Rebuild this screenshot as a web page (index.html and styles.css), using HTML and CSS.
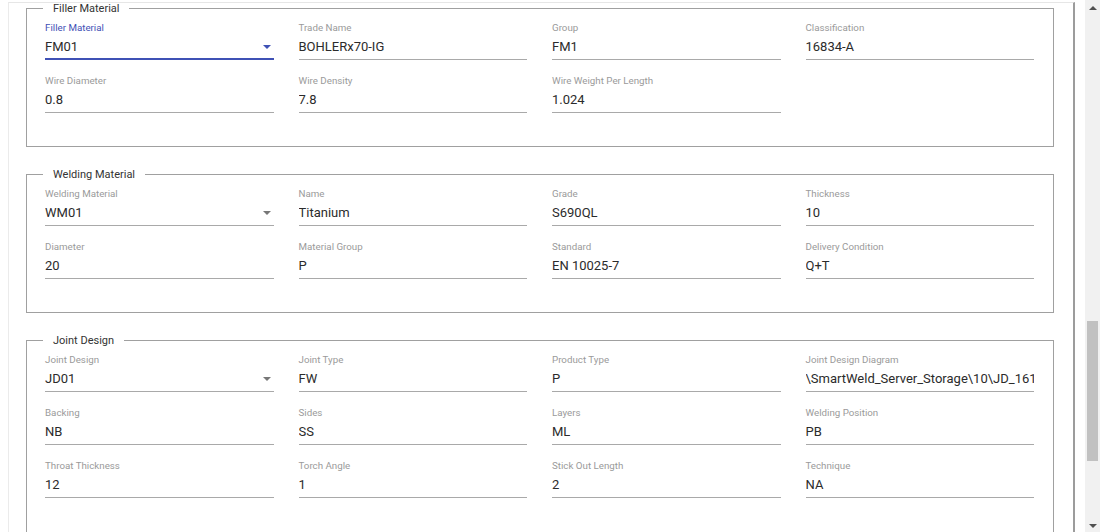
FILE: index.html
```html
<!DOCTYPE html>
<html>
<head>
<meta charset="utf-8">
<link rel="stylesheet" href="styles.css">
</head>
<body>
<div class="page">
  <div class="main">
    <div class="card">
      <fieldset class="group">
        <legend>Filler Material</legend>
        <div class="grid">
          <div class="field focused">
            <div class="label">Filler Material</div>
            <div class="control"><span class="value">FM01</span><span class="arrow"></span></div>
          </div>
          <div class="field">
            <div class="label">Trade Name</div>
            <div class="control"><span class="value">BOHLERx70-IG</span></div>
          </div>
          <div class="field">
            <div class="label">Group</div>
            <div class="control"><span class="value">FM1</span></div>
          </div>
          <div class="field">
            <div class="label">Classification</div>
            <div class="control"><span class="value">16834-A</span></div>
          </div>
          <div class="field">
            <div class="label">Wire Diameter</div>
            <div class="control"><span class="value">0.8</span></div>
          </div>
          <div class="field">
            <div class="label">Wire Density</div>
            <div class="control"><span class="value">7.8</span></div>
          </div>
          <div class="field">
            <div class="label">Wire Weight Per Length</div>
            <div class="control"><span class="value">1.024</span></div>
          </div>
        </div>
      </fieldset>

      <fieldset class="group">
        <legend>Welding Material</legend>
        <div class="grid">
          <div class="field">
            <div class="label">Welding Material</div>
            <div class="control"><span class="value">WM01</span><span class="arrow"></span></div>
          </div>
          <div class="field">
            <div class="label">Name</div>
            <div class="control"><span class="value">Titanium</span></div>
          </div>
          <div class="field">
            <div class="label">Grade</div>
            <div class="control"><span class="value">S690QL</span></div>
          </div>
          <div class="field">
            <div class="label">Thickness</div>
            <div class="control"><span class="value">10</span></div>
          </div>
          <div class="field">
            <div class="label">Diameter</div>
            <div class="control"><span class="value">20</span></div>
          </div>
          <div class="field">
            <div class="label">Material Group</div>
            <div class="control"><span class="value">P</span></div>
          </div>
          <div class="field">
            <div class="label">Standard</div>
            <div class="control"><span class="value">EN 10025-7</span></div>
          </div>
          <div class="field">
            <div class="label">Delivery Condition</div>
            <div class="control"><span class="value">Q+T</span></div>
          </div>
        </div>
      </fieldset>

      <fieldset class="group">
        <legend>Joint Design</legend>
        <div class="grid">
          <div class="field">
            <div class="label">Joint Design</div>
            <div class="control"><span class="value">JD01</span><span class="arrow"></span></div>
          </div>
          <div class="field">
            <div class="label">Joint Type</div>
            <div class="control"><span class="value">FW</span></div>
          </div>
          <div class="field">
            <div class="label">Product Type</div>
            <div class="control"><span class="value">P</span></div>
          </div>
          <div class="field">
            <div class="label">Joint Design Diagram</div>
            <div class="control"><span class="value">\SmartWeld_Server_Storage\10\JD_1614839201.png</span></div>
          </div>
          <div class="field">
            <div class="label">Backing</div>
            <div class="control"><span class="value">NB</span></div>
          </div>
          <div class="field">
            <div class="label">Sides</div>
            <div class="control"><span class="value">SS</span></div>
          </div>
          <div class="field">
            <div class="label">Layers</div>
            <div class="control"><span class="value">ML</span></div>
          </div>
          <div class="field">
            <div class="label">Welding Position</div>
            <div class="control"><span class="value">PB</span></div>
          </div>
          <div class="field">
            <div class="label">Throat Thickness</div>
            <div class="control"><span class="value">12</span></div>
          </div>
          <div class="field">
            <div class="label">Torch Angle</div>
            <div class="control"><span class="value">1</span></div>
          </div>
          <div class="field">
            <div class="label">Stick Out Length</div>
            <div class="control"><span class="value">2</span></div>
          </div>
          <div class="field">
            <div class="label">Technique</div>
            <div class="control"><span class="value">NA</span></div>
          </div>
        </div>
      </fieldset>
    </div>
  </div>
  <div class="scrollbar">
    <div class="sb-btn sb-up"><span class="tri-up"></span></div>
    <div class="sb-track"><div class="sb-thumb"></div></div>
    <div class="sb-btn sb-down"><span class="tri-down"></span></div>
  </div>
</div>
</body>
</html>
```
FILE: styles.css
```css
html, body {
  margin: 0;
  padding: 0;
  background: #ffffff;
}

body {
  font-family: Roboto, "Liberation Sans", Arial, sans-serif;
}

.page {
  display: flex;
  height: 532px;
  overflow: hidden;
}

.main {
  flex: 1;
  display: flex;
  flex-direction: column;
  padding: 0 10px 0 8px;
  min-width: 0;
}

.card {
  flex: 1;
  margin-top: 2px;
  border-top: 1px solid #e6e6e6;
  border-left: 1px solid #ebebeb;
  border-right: 2px solid #9c9c9c;
  padding: 0 19px 0 17px;
  display: flex;
  flex-direction: column;
  gap: 22px;
  overflow: hidden;
}

.group {
  margin: 0;
  min-width: 0;
  border: 1px solid #a0a0a0;
  padding: 8px 19px 33px 18px;
  flex-shrink: 0;
}

.group:last-child {
  padding-bottom: 40px;
}

.group legend {
  font-size: 11px;
  line-height: 11px;
  color: #333333;
  padding: 0 10px;
  margin-left: -2px;
}

.grid {
  display: grid;
  grid-template-columns: repeat(4, 1fr);
  column-gap: 25px;
  row-gap: 15px;
}

.field {
  min-width: 0;
}

.label {
  font-size: 9.75px;
  line-height: 12px;
  height: 12px;
  color: #9a9a9a;
  white-space: nowrap;
}

.control {
  margin-top: 4px;
  height: 18px;
  display: flex;
  align-items: center;
  padding-bottom: 3px;
  border-bottom: 1px solid #a9a9a9;
}

.value {
  flex: 1;
  min-width: 0;
  font-size: 13px;
  line-height: 18px;
  color: #2b2b2b;
  white-space: nowrap;
  overflow: hidden;
}

.arrow {
  width: 0;
  height: 0;
  border-left: 4px solid transparent;
  border-right: 4px solid transparent;
  border-top: 4px solid #777777;
  margin-right: 3px;
}

.focused .label {
  color: #3f51b5;
}

.focused .control {
  border-bottom: 2px solid #3f51b5;
  padding-bottom: 2px;
}

.focused .arrow {
  border-top-color: #3f51b5;
}

.scrollbar {
  width: 15px;
  flex-shrink: 0;
  background: #f1f1f1;
  display: flex;
  flex-direction: column;
}

.sb-btn {
  display: flex;
  align-items: center;
  justify-content: center;
}

.sb-up {
  height: 16px;
}

.sb-down {
  height: 12px;
}

.sb-track {
  flex: 1;
}

.sb-thumb {
  margin: 305px 2px 0 2px;
  height: 140px;
  background: #c1c1c1;
}

.tri-up {
  width: 0;
  height: 0;
  border-left: 4px solid transparent;
  border-right: 4px solid transparent;
  border-bottom: 4px solid #505050;
}

.tri-down {
  width: 0;
  height: 0;
  border-left: 4px solid transparent;
  border-right: 4px solid transparent;
  border-top: 4px solid #505050;
}
```
